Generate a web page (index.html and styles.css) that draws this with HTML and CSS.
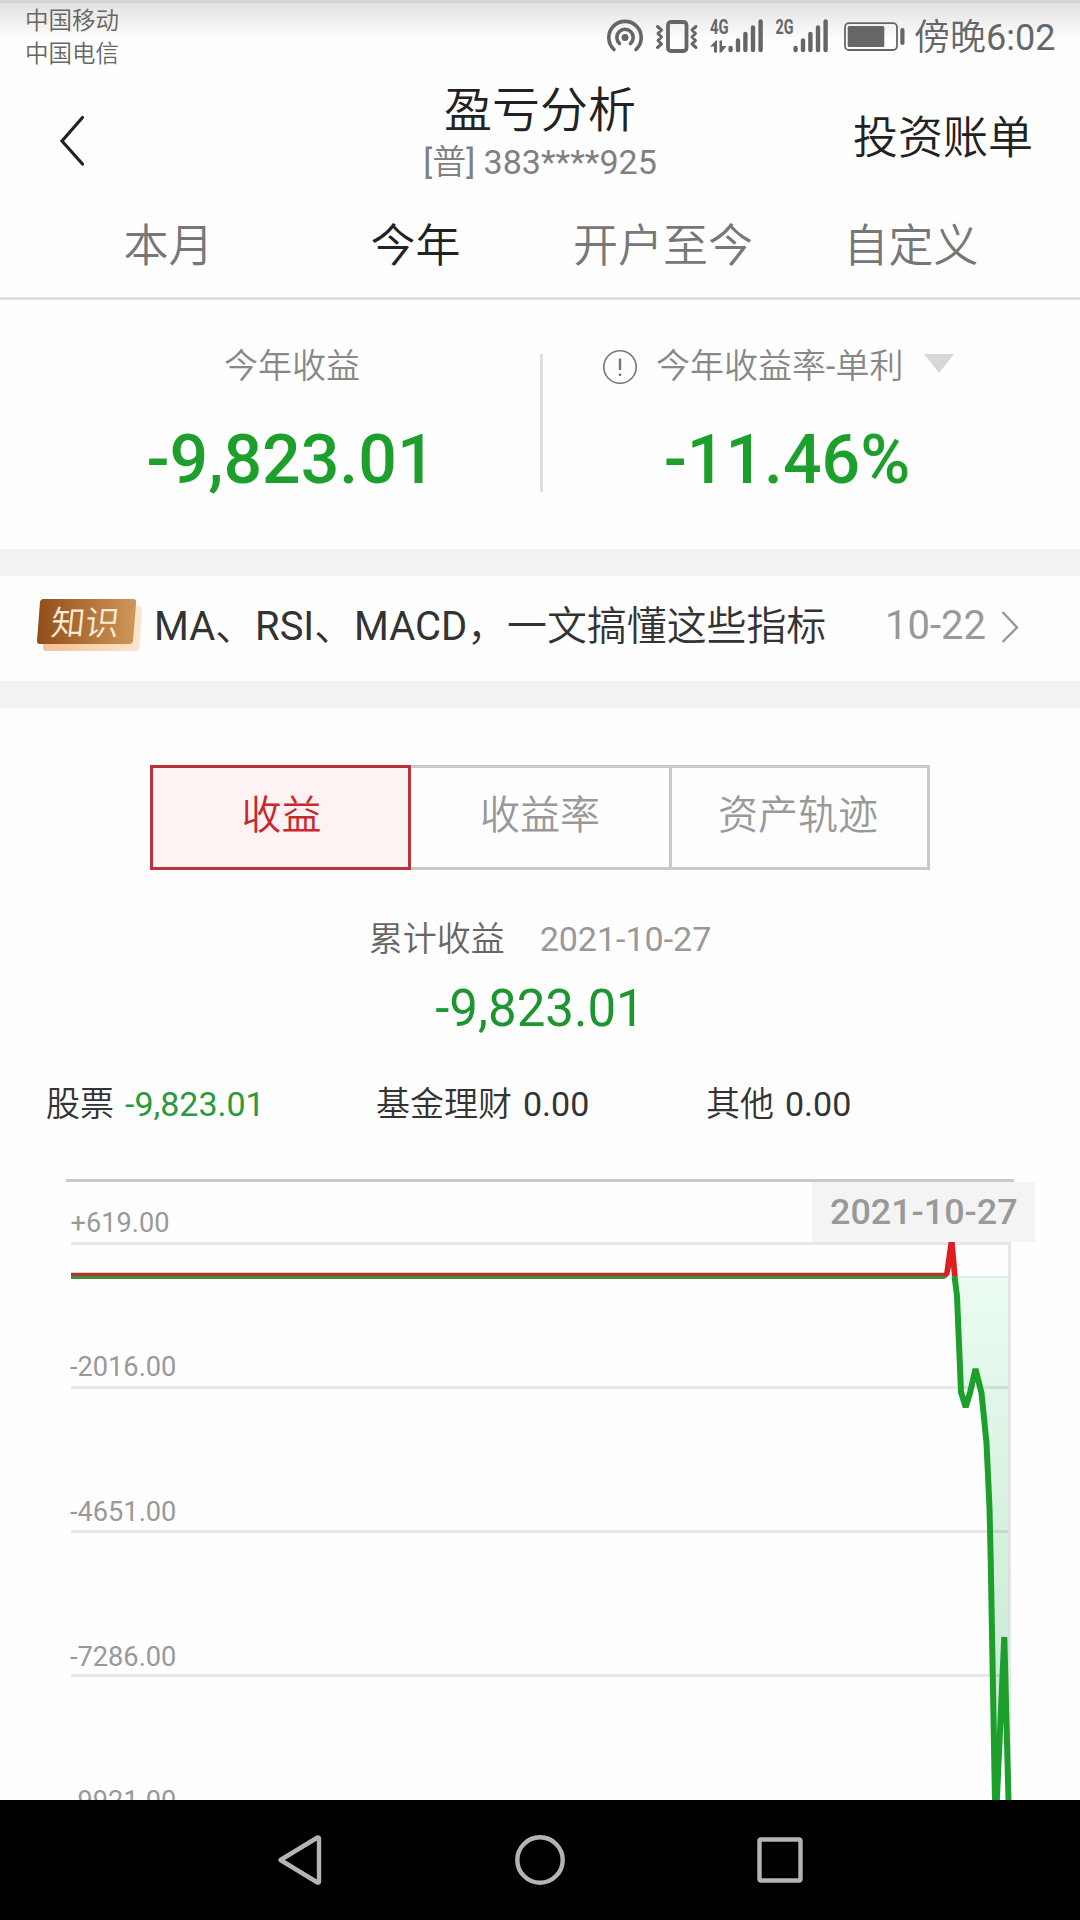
FILE: index.html
```html
<!DOCTYPE html>
<html lang="zh-CN">
<head>
<meta charset="utf-8">
<title>盈亏分析</title>
<link rel="stylesheet" href="styles.css">
</head>
<body>
<div class="screen">
  <header class="status">
    <div class="carriers"><span>中国移动</span><span>中国电信</span></div>
    <svg class="status-icons" width="312" height="60" viewBox="600 0 312 60">
      <g fill="none" stroke="#666" stroke-width="3.6" stroke-linecap="round">
        <path d="M614 49.500A16.200 16.200 0 1 1 636 49.500"/>
        <path d="M619.500 43.500A8.200 8.200 0 1 1 630.500 43.500"/>
        <rect x="668" y="22" width="18.500" height="29" rx="3" stroke-width="3.800"/>
        <path stroke-width="3" stroke-linejoin="round" d="M657.500 26.500l4 3.500-3.500 3.500 3.500 3.500-3.500 3.500 3.500 3.500-4 3.500M696 26.500l-4 3.500 3.500 3.500-3.500 3.500 3.500 3.500-3.500 3.500 4 3.500"/>
      </g>
      <circle cx="625" cy="37.500" r="3.500" fill="#666"/>
      <text class="net" x="710" y="34" textLength="18.500" lengthAdjust="spacingAndGlyphs">4G</text>
      <text class="net" x="775.500" y="34" textLength="18" lengthAdjust="spacingAndGlyphs">2G</text>
      <path fill="#666" d="M714 52.500V46.500H710L716 40.500H717V52.500ZM719.500 40.500H722V46H726.500L721.500 52.500H719.500Z"/>
      <g stroke="#666" stroke-width="4.400" stroke-linecap="round">
        <path d="M730.600 48v2M738 40.500v9.500M745.400 34v16M753 27.500v22.500M760.600 21.500v28.500"/>
        <path d="M795.600 48v2M803 40.500v9.500M810.400 34v16M818 27.500v22.500M825.600 21.500v28.500"/>
      </g>
      <rect x="845" y="23.200" width="52" height="26.800" rx="4" fill="none" stroke="#666" stroke-width="1.800"/>
      <rect x="847.700" y="26" width="36.600" height="21" rx="1.500" fill="#666"/>
      <rect x="900.300" y="28" width="4.200" height="17" rx="2" fill="#666"/>
    </svg>
    <div class="clock">傍晚6:02</div>
  </header>

  <nav class="titlebar">
    <svg class="back" width="28" height="54" viewBox="0 0 28 54"><path d="M24.500 3.500L4 27L24.500 50"/></svg>
    <div class="heading">
      <h1>盈亏分析</h1>
      <p>[普] 383****925</p>
    </div>
    <a class="bill">投资账单</a>
  </nav>

  <div class="tabs">
    <span>本月</span><span class="on">今年</span><span>开户至今</span><span>自定义</span>
  </div>

  <section class="summary">
    <div class="metric">
      <div class="label">今年收益</div>
      <div class="big">-9,823.01</div>
    </div>
    <div class="metric right">
      <div class="label">
        <svg width="36" height="36" viewBox="0 0 36 36"><circle cx="18" cy="18" r="16.200"/><path d="M18 9.500v11.500M18 24.500v2.500"/></svg>
        <span>今年收益率-单利</span><i class="caret"></i>
      </div>
      <div class="big">-11.46%</div>
    </div>
  </section>

  <section class="news">
    <svg class="badge" width="110" height="56" viewBox="34 597 110 56">
      <defs>
        <linearGradient id="bronze"><stop offset="0" stop-color="#914d19"/><stop offset="1" stop-color="#d0975a"/></linearGradient>
        <linearGradient id="cream"><stop offset="0" stop-color="#f8c190"/><stop offset="1" stop-color="#fbe6d2"/></linearGradient>
      </defs>
      <path fill="url(#cream)" d="M50 606H139Q142 606 142 609L139.500 648Q139 651 136 651H46Q43 651 43 648L46 609Q47 606 50 606Z"/>
      <path fill="url(#bronze)" d="M43.500 599H133Q136.500 599 136.200 602L133 641Q132.500 644 129.500 644H40Q36.800 644 37 641L40 602Q40.500 599 43.500 599Z"/>
      <text class="badge-text" transform="translate(50 635) skewX(-6)">知识</text>
    </svg>
    <span class="news-title">MA、RSI、MACD，一文搞懂这些指标</span>
    <span class="news-date">10-22</span>
    <svg class="more" width="20" height="36" viewBox="0 0 20 36"><path d="M2.500 3L17 18.500L2.500 33"/></svg>
  </section>

  <section class="detail">
    <div class="segments"><span class="on">收益</span><span>收益率</span><span>资产轨迹</span></div>
    <div class="caption"><span>累计收益</span><span class="day">2021-10-27</span></div>
    <div class="total">-9,823.01</div>
    <div class="split">
      <div>股票<b class="loss">-9,823.01</b></div>
      <div>基金理财<b>0.00</b></div>
      <div>其他<b>0.00</b></div>
    </div>
    <svg class="chart" width="1080" height="630" viewBox="0 1170 1080 630">
      <defs>
        <linearGradient id="area" gradientUnits="userSpaceOnUse" x1="0" y1="1276" x2="0" y2="1800"><stop offset="0" stop-color="#ebfbf1"/><stop offset=".4" stop-color="#daf3e3"/><stop offset="1" stop-color="#c2e5cf"/></linearGradient>
      </defs>
      <path fill="#c9c9c9" d="M66 1179H1014V1182H66Z"/>
      <path fill="url(#area)" d="M954.500 1276L957 1296L961 1392L965.700 1406L970 1393L975.500 1369L981.500 1393L986.500 1443L989.500 1508L990.700 1560L995 1810L1004.300 1639L1008.500 1800V1276Z"/>
      <path stroke="#000" stroke-opacity=".09" stroke-width="3" d="M71 1243.500H1010M71 1387.500H1010M71 1531.500H1010M71 1675.500H1005M1009.500 1242V1800"/>
      <path stroke="#dfe6dc" stroke-width="1.500" d="M954 1276.700H1008"/>
      <g class="axis">
        <text x="70.500" y="1231.500">+619.00</text>
        <text x="70" y="1375.700">-2016.00</text>
        <text x="70" y="1520.700">-4651.00</text>
        <text x="70" y="1665.700">-7286.00</text>
        <text x="70" y="1809.700">-9921.00</text>
      </g>
      <path fill="#4a8a3c" d="M71 1275.700H948Q946 1279 944 1279H71Z"/>
      <path fill="#a63a2c" d="M71 1272.800H946V1276H71Z"/>
      <path fill="none" stroke="#1d9f2b" stroke-width="6" stroke-linejoin="bevel" d="M954.500 1276L957 1296L961 1392L965.700 1407L970 1393L975.500 1369L981.500 1393L986.500 1443L989.500 1508L990.700 1560L993 1690L995.500 1830L1004.300 1637L1008.500 1800"/>
      <path fill="#dd1f22" d="M944 1274L948.500 1242H954.700L957.700 1276H952L951 1267L949.500 1274Q948 1278 945 1276Z"/>
      <rect x="812" y="1182" width="223" height="59.700" fill="#f4f4f4"/>
      <text class="tip" x="830" y="1224">2021-10-27</text>
    </svg>
  </section>

  <footer class="softkeys">
    <svg width="1080" height="120" viewBox="0 1800 1080 120">
      <g fill="none" stroke="#b4b4b4" stroke-width="4.400" stroke-linejoin="round">
        <path d="M280.500 1860L317.500 1837.500Q319 1837 319 1838.500V1881.500Q319 1883 317.500 1882.500Z"/>
        <circle cx="540" cy="1860" r="22.700"/>
        <rect x="759.500" y="1839.500" width="41" height="41" rx="1.500"/>
      </g>
    </svg>
  </footer>
</div>
</body>
</html>
```
FILE: styles.css
```css
* { box-sizing: border-box; margin: 0; padding: 0; }

body {
  background: #fff;
  font-family: Roboto, "Noto Sans CJK SC DemiLight", "Noto Sans CJK SC", sans-serif;
  color: #333;
}

.screen {
  width: 1080px;
  height: 1920px;
  overflow: hidden;
  display: flex;
  flex-direction: column;
  background: #fefefe;
}

.status {
  height: 76px;
  display: flex;
  border-top: 3px solid #d4d4d4;
  background: linear-gradient(#e2e2e2, #fefefe 38px);
  color: #666;
}
.carriers {
  width: 600px;
  padding: 2px 0 0 25px;
  display: flex;
  flex-direction: column;
  font-size: 23.5px;
  line-height: 33.300px;
}
.status-icons { margin-top: -3px; }
.net { font: 700 21px Roboto, sans-serif; fill: #666; }
.clock { margin-left: 2px; font-size: 36px; line-height: 71px; white-space: nowrap; }

.titlebar {
  height: 124px;
  display: grid;
  grid-template-columns: 340px 400px 340px;
}
.back { margin: 38px 0 0 58px; }
.back path { fill: none; stroke: #222; stroke-width: 3.2; stroke-linecap: round; }
.heading { text-align: center; padding-top: 5px; }
.heading h1 { font-size: 48px; font-weight: 400; line-height: 60px; color: #222; }
.heading p { font-size: 34px; line-height: 42px; color: #808080; }
.bill { padding-right: 47px; text-align: right; font-size: 45px; line-height: 126px; color: #222; }

.tabs {
  height: 100px;
  display: grid;
  grid-template-columns: 247px 247px 248px 248px;
  padding-left: 45px;
  border-bottom: 3px solid #dfdfdf;
  font-size: 45px;
  line-height: 93px;
  text-align: center;
  color: #777;
}
.tabs .on { color: #222; }

.summary {
  height: 249px;
  display: flex;
  position: relative;
  padding-top: 38px;
}
.metric { width: 540px; padding-left: 44px; text-align: center; }
.metric.right { padding-left: 0; }
.summary::after {
  content: "";
  position: absolute;
  left: 540px;
  top: 54px;
  width: 3px;
  height: 138px;
  background: #ddd;
}
.label {
  height: 50px;
  display: flex;
  justify-content: center;
  align-items: center;
  font-size: 34px;
  color: #888;
}
.right .label { justify-content: flex-start; padding-left: 62px; }
.label svg { margin-top: 7px; fill: none; stroke: #777; stroke-width: 1.6; }
.label svg path { stroke-width: 2.4; }
.label span { margin: 0 21px 0 18px; }
.caret { border: 15.500px solid transparent; border-top: 19px solid #d8d8d8; border-bottom: 0; }
.big { font-size: 68px; font-weight: 500; line-height: 80px; margin-top: 32px; color: #1d9f2b; }
.metric .big { padding-right: 2px; }
.metric.right .big { padding: 0; margin-left: -46px; }

.news {
  height: 159px;
  border-top: 27px solid #f2f2f2;
  border-bottom: 27px solid #f2f2f2;
  display: flex;
  align-items: center;
  padding: 0 60px 7px 34px;
  font-size: 40px;
  white-space: nowrap;
}
.badge-text { font-size: 34px; fill: #ffecd6; }
.news-title { margin: -6px 0 0 10px; font-size: 39.900px; }
.news-date { margin-left: auto; color: #999; }
.more { margin: 4px 0 0 14px; }
.more path { fill: none; stroke: #999; stroke-width: 2.4; }

.detail { flex: 1; display: flex; flex-direction: column; }
.segments {
  width: 780px;
  height: 105px;
  margin: 57px auto 0;
  display: grid;
  grid-template-columns: 261px 261px 258px;
  border: 3px solid #c9c9c9;
  border-left: 0;
  font-size: 40px;
  line-height: 95px;
  text-align: center;
  color: #999;
}
.segments span + span { border-right: 3px solid #c9c9c9; }
.segments span:last-child { border-right: 0; padding-right: 6px; }
.segments .on { margin: -3px 0; padding-left: 2px; border: 3px solid #b9333a; background: #fdf3f3; color: #c9282d; }
.caption { display: flex; justify-content: center; gap: 35px; margin-top: 44px; font-size: 34px; line-height: 50px; color: #666; }
.day { color: #999; }
.total { margin-top: 12px; font-size: 51px; line-height: 66px; text-align: center; color: #1d9531; }
.split { display: flex; padding-left: 46px; margin-top: 37px; height: 52px; font-size: 34px; line-height: 50px; }
.split div { width: 330px; }
.split b { font-weight: 400; margin-left: 11px; }
.loss { color: #2b9a3e; }
.chart { display: block; margin-top: auto; }
.axis text { font-size: 27.2px; fill: #999; }
.tip { font-size: 35.900px; font-weight: 500; fill: #999; }

.softkeys { height: 120px; background: #000; }
.softkeys svg { display: block; }
```
